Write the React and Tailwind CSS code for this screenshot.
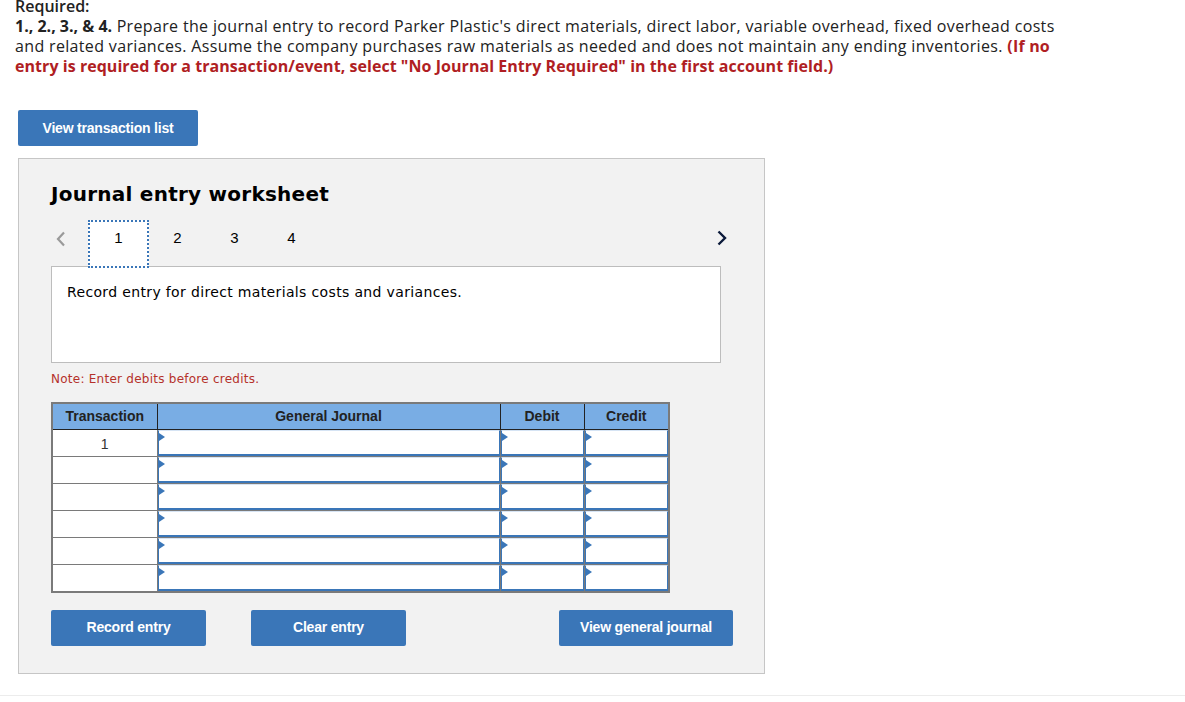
import React from "react";

const BLUE = "bg-[#3a76b8]";

function InputCell() {
  return (
    <td className="border border-[#7a7a7a] p-0 h-[27px] bg-white">
      <div className="relative h-[26px] border border-[#3a76b8] border-t-[#d6e4f4] border-b-2 bg-white">
        <span className="absolute left-0 top-[2px] w-0 h-0 border-y-[4px] border-y-transparent border-l-[6px] border-l-[#3a76b8]" />
      </div>
    </td>
  );
}

export default function App() {
  const rows = ["1", "", "", "", "", ""];

  return (
    <div className="min-h-screen bg-white text-[#222]" style={{ fontFamily: "'Open Sans', Lato, sans-serif" }}>
      {/* Instructions */}
      <div className="px-[15px] -mt-[4px] text-[16px] leading-[20px] tracking-[0.34px]">
        <div className="font-semibold tracking-normal">Required:</div>
        <div>
          <b className="tracking-normal">1., 2., 3., &amp; 4.</b> Prepare the journal entry to record Parker Plastic's direct materials, direct labor, variable overhead, fixed overhead costs
          <br />
          and related variances. Assume the company purchases raw materials as needed and does not maintain any ending inventories.{" "}
          <span className="font-bold text-[#b01e23] tracking-[0.2px]">(If no</span>
          <br />
          <span className="font-bold text-[#b01e23] tracking-[0.05px]">entry is required for a transaction/event, select "No Journal Entry Required" in the first account field.)</span>
        </div>
      </div>

      <div className="px-[18px]">
        <button
          className={`mt-[34px] w-[180px] h-[36px] ${BLUE} text-white rounded-[2px] font-bold text-[14px] tracking-[-0.2px]`}
          style={{ fontFamily: "'Liberation Sans', Arial, sans-serif" }}
        >
          View transaction list
        </button>

        {/* Worksheet panel */}
        <div className="mt-[12px] w-[747px] bg-[#f2f2f2] border border-[#c6c6c6] pl-[32px] pt-[23px] pb-[27px]">
          <h2
            className="text-[20px] leading-[24px] font-bold text-black tracking-[0.25px]"
            style={{ fontFamily: "'DejaVu Sans', Verdana, sans-serif" }}
          >
            Journal entry worksheet
          </h2>

          {/* Tabs */}
          <div
            className="mt-[14px] flex items-start w-[669px] relative z-10 text-[15px] text-black"
            style={{ fontFamily: "'Liberation Sans', Arial, sans-serif" }}
          >
            <div className="w-[37px] h-[48px] flex pt-[9px] pl-[4px]">
              <svg width="12" height="16" viewBox="0 0 12 16" className="mt-[2px]">
                <path d="M9 1.5 L3 8 L9 14.5" fill="none" stroke="#9a9a9a" strokeWidth="2.2" />
              </svg>
            </div>
            <div className="w-[61px] h-[48px] bg-white border-2 border-dotted border-[#3a76b8] text-center pt-[6px] leading-[20px]">
              1
            </div>
            <div className="w-[57px] text-center pt-[8px] leading-[20px]">2</div>
            <div className="w-[57px] text-center pt-[8px] leading-[20px]">3</div>
            <div className="w-[57px] text-center pt-[8px] leading-[20px]">4</div>
            <div className="flex-1 flex justify-end pt-[10px]">
              <svg width="12" height="16" viewBox="0 0 12 16" className="-mr-[8px]">
                <path d="M2.5 1.5 L9 8 L2.5 14.5" fill="none" stroke="#0b1a3a" strokeWidth="2.4" />
              </svg>
            </div>
          </div>

          {/* Description */}
          <div
            className="-mt-[2px] w-[670px] h-[97px] bg-white border border-[#bdbdbd] pl-[15px] pt-[15px] text-[14px] leading-[20px] text-black tracking-[0.35px]"
            style={{ fontFamily: "'DejaVu Sans', Verdana, sans-serif" }}
          >
            Record entry for direct materials costs and variances.
          </div>

          <div
            className="mt-[8px] text-[12px] leading-[16px] text-[#b5312a] tracking-[0.25px]"
            style={{ fontFamily: "'DejaVu Sans', Verdana, sans-serif" }}
          >
            Note: Enter debits before credits.
          </div>

          {/* Table */}
          <table
            className="mt-[15px] border-collapse border-2 border-[#7a7a7a] text-[14px]"
            style={{ fontFamily: "'Liberation Sans', Arial, sans-serif" }}
          >
            <thead>
              <tr className="bg-[#79ade4] h-[26px] text-[#222]">
                <th className="w-[105px] border border-[#222] border-l-[#7a7a7a] border-t-[#7a7a7a] font-bold">Transaction</th>
                <th className="w-[343px] border border-[#222] border-t-[#7a7a7a] font-bold">General Journal</th>
                <th className="w-[84px] border border-[#222] border-t-[#7a7a7a] font-bold">Debit</th>
                <th className="w-[85px] border border-[#222] border-t-[#7a7a7a] border-r-[#7a7a7a] font-bold">Credit</th>
              </tr>
            </thead>
            <tbody>
              {rows.map((r, i) => (
                <tr key={i}>
                  <td className="border border-[#7a7a7a] bg-white text-center align-top pt-[4px] text-[14px] text-[#333] h-[27px]">
                    {r}
                  </td>
                  <InputCell />
                  <InputCell />
                  <InputCell />
                </tr>
              ))}
            </tbody>
          </table>

          {/* Buttons */}
          <div
            className="mt-[17px] flex text-white font-bold text-[14px] tracking-[-0.2px]"
            style={{ fontFamily: "'Liberation Sans', Arial, sans-serif" }}
          >
            <button className={`w-[155px] h-[36px] ${BLUE} rounded-[2px]`}>Record entry</button>
            <button className={`ml-[45px] w-[155px] h-[36px] ${BLUE} rounded-[2px]`}>Clear entry</button>
            <button className={`ml-[153px] w-[174px] h-[36px] ${BLUE} rounded-[2px]`}>View general journal</button>
          </div>
        </div>
      </div>

      <div className="mt-[21px] border-t border-[#ececec]" />
    </div>
  );
}
